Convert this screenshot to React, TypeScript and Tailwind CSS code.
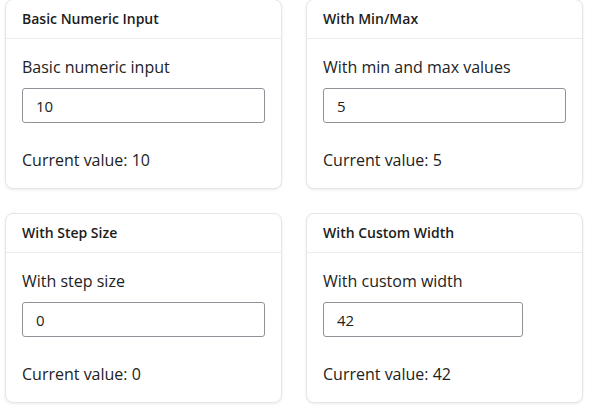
import { useState } from 'react'

type Example = {
  title: string
  label: string
  initial: number
  min?: number
  max?: number
  step?: number
  width?: string
}

const examples: Example[] = [
  { title: 'Basic Numeric Input', label: 'Basic numeric input', initial: 10 },
  { title: 'With Min/Max', label: 'With min and max values', initial: 5, min: 0, max: 10 },
  { title: 'With Step Size', label: 'With step size', initial: 0, step: 5 },
  { title: 'With Custom Width', label: 'With custom width', initial: 42, width: 'w-[200px]' },
]

export default function App() {
  return (
    <div
      className="min-h-screen bg-white text-[#222] pl-[5px] -mt-px"
      style={{ fontFamily: '"Open Sans", "Noto Sans", sans-serif' }}
    >
      <div className="grid grid-cols-[277px_277px] gap-x-6 gap-y-6">
        {examples.map((ex) => (
          <NumericCard key={ex.title} {...ex} />
        ))}
      </div>
    </div>
  )
}

function NumericCard({ title, label, initial, min, max, step, width }: Example) {
  const [value, setValue] = useState(initial)

  return (
    <div className="rounded-lg border border-[#e6e6e6] bg-white shadow-[0_1px_3px_rgba(0,0,0,0.08)]">
      <div className="border-b border-[#ececec] px-4 py-[10px]">
        <h3 className="text-sm leading-[18px] font-semibold text-[#1c1c1c]">{title}</h3>
      </div>
      <div className="px-4 pt-4 pb-4">
        <label className="block text-base leading-6 text-[#222]">{label}</label>
        <input
          type="number"
          value={value}
          min={min}
          max={max}
          step={step}
          onChange={(e) => setValue(Number(e.target.value))}
          className={`mt-[9px] block h-[35px] ${width ?? 'w-full'} rounded-[3px] border border-[#8e9399] bg-white px-[13px] text-[15px] text-[#222] outline-none [appearance:textfield] [&::-webkit-inner-spin-button]:appearance-none [&::-webkit-outer-spin-button]:appearance-none`}
        />
        <p className="mt-[25px] text-base leading-6 text-[#222]">Current value: {value}</p>
      </div>
    </div>
  )
}
